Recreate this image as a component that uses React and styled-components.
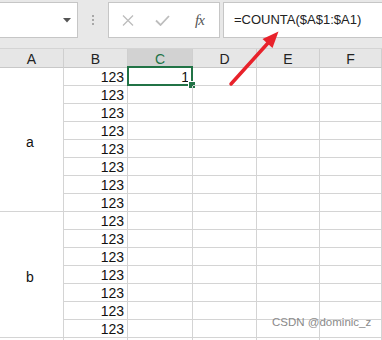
import React from "react";
import styled, { createGlobalStyle } from "styled-components";

const GlobalStyle = createGlobalStyle`
  html, body {
    margin: 0;
    padding: 0;
    background: #ffffff;
  }
  body {
    font-family: "Liberation Sans", Arial, sans-serif;
  }
`;

const Page = styled.div`
  position: relative;
  width: 382px;
  height: 340px;
  overflow: hidden;
  background: #fff;
`;

const Toolbar = styled.div`
  height: 48px;
  box-sizing: border-box;
  padding-top: 2px;
  background: #e8e8e8;
  display: flex;
  align-items: flex-start;
`;

const NameBox = styled.div`
  width: 78px;
  height: 36px;
  box-sizing: border-box;
  background: #fff;
  border: 1px solid #c6c6c6;
  border-left: none;
  display: flex;
  align-items: center;
  justify-content: flex-end;
  padding-right: 6px;
`;

const Grip = styled.div`
  width: 30px;
  height: 36px;
  display: flex;
  flex-direction: column;
  align-items: center;
  justify-content: center;
  gap: 2px;
  span {
    width: 2px;
    height: 2px;
    background: #a8a8a8;
  }
`;

const ToolGroup = styled.div`
  width: 112px;
  height: 36px;
  box-sizing: border-box;
  background: #fff;
  border: 1px solid #c6c6c6;
  display: flex;
  align-items: center;
  padding-left: 13px;
  gap: 21px;
`;

const FxLabel = styled.span`
  font-family: "Liberation Serif", "Times New Roman", serif;
  font-style: italic;
  font-size: 15px;
  color: #555;
  margin-left: 4px;
  letter-spacing: -1px;
`;

const FormulaBox = styled.div`
  flex: 1;
  margin-left: 3px;
  height: 36px;
  box-sizing: border-box;
  background: #fff;
  border: 1px solid #c6c6c6;
  border-right: none;
  display: flex;
  align-items: center;
  padding-left: 10px;
  padding-bottom: 2px;
  font-size: 13px;
  color: #222;
`;

const Sheet = styled.div`
  display: grid;
  grid-template-columns: 64px 64px 65px 64px 63px 1fr;
  grid-auto-rows: 18px;
  grid-template-rows: 19px;
  border-top: 1px solid #d4d4d4;
  font-size: 14px;
  color: #111;
`;

const HeadCell = styled.div`
  box-sizing: border-box;
  background: ${(p) => (p.$active ? "#d2d2d2" : "#e6e6e6")};
  color: ${(p) => (p.$active ? "#217346" : "#222")};
  border-right: 1px solid #cfcfcf;
  border-bottom: 1px solid #c8c8c8;
  display: flex;
  align-items: center;
  justify-content: center;
  padding-top: 1px;
`;

const Cell = styled.div`
  position: relative;
  box-sizing: border-box;
  border-right: 1px solid #d4d4d4;
  border-bottom: 1px solid #d4d4d4;
  display: flex;
  align-items: center;
  justify-content: ${(p) => (p.$align === "center" ? "center" : "flex-end")};
  padding-right: 3px;
  padding-top: ${(p) => (p.$align === "center" ? "4px" : "0")};
  grid-row: ${(p) => (p.$span ? `span ${p.$span}` : "auto")};
  line-height: 1;
`;

const SelectionFrame = styled.div`
  position: absolute;
  left: -1px;
  top: -2px;
  right: -1px;
  bottom: -1px;
  border: 2px solid #217346;
`;

const FillHandle = styled.div`
  position: absolute;
  right: -5px;
  bottom: -5px;
  width: 6px;
  height: 6px;
  background: #217346;
  border: 1px solid #fff;
`;

const Overlay = styled.svg`
  position: absolute;
  left: 0;
  top: 0;
  pointer-events: none;
`;

const Watermark = styled.div`
  position: absolute;
  left: 272px;
  top: 316px;
  font-size: 11.5px;
  color: #8a8a8a;
  white-space: nowrap;
`;

const columns = ["A", "B", "C", "D", "E", "F"];

const Row = ({ index, value = "123" }) => (
  <>
    <Cell>{value}</Cell>
    <Cell>
      {index === 0 && (
        <>
          1
          <SelectionFrame>
            <FillHandle />
          </SelectionFrame>
        </>
      )}
    </Cell>
    <Cell />
    <Cell />
    <Cell />
  </>
);

export default function App() {
  const groupA = Array.from({ length: 8 }, (_, i) => i);
  const groupB = Array.from({ length: 7 }, (_, i) => i + 8);

  return (
    <Page>
      <GlobalStyle />
      <Toolbar>
        <NameBox>
          <svg width="8" height="5" viewBox="0 0 8 5">
            <path d="M0 0 H8 L4 4.5 Z" fill="#555" />
          </svg>
        </NameBox>
        <Grip>
          <span />
          <span />
          <span />
        </Grip>
        <ToolGroup>
          <svg width="12" height="11" viewBox="0 0 12 11">
            <path d="M1 0.5 L11 10.5 M11 0.5 L1 10.5" stroke="#bdbdbd" strokeWidth="1.3" fill="none" />
          </svg>
          <svg width="15" height="11" viewBox="0 0 15 11">
            <path d="M1 5.5 L5.5 10 L14 1" stroke="#bdbdbd" strokeWidth="1.8" fill="none" />
          </svg>
          <FxLabel>fx</FxLabel>
        </ToolGroup>
        <FormulaBox>=COUNTA($A$1:$A1)</FormulaBox>
      </Toolbar>

      <Sheet>
        {columns.map((c) => (
          <HeadCell key={c} $active={c === "C"}>
            {c}
          </HeadCell>
        ))}

        {groupA.map((i) => (
          <React.Fragment key={i}>
            {i === 0 && (
              <Cell $span={8} $align="center">
                a
              </Cell>
            )}
            <Row index={i} />
          </React.Fragment>
        ))}

        {groupB.map((i) => (
          <React.Fragment key={i}>
            {i === 8 && (
              <Cell $span={7} $align="center">
                b
              </Cell>
            )}
            <Row index={i} />
          </React.Fragment>
        ))}

        {/* row 16 only peeks in below the fold */}
        <Cell />
        <Row index={15} value="" />
      </Sheet>

      <Overlay width="382" height="340" viewBox="0 0 382 340">
        <line x1="231" y1="84" x2="268" y2="43" stroke="#e8222b" strokeWidth="3.5" strokeLinecap="round" />
        <path d="M278.5 31.5 L272.5 48 L262.5 39 Z" fill="#e8222b" />
      </Overlay>

      <Watermark>CSDN @dominic_z</Watermark>
    </Page>
  );
}
